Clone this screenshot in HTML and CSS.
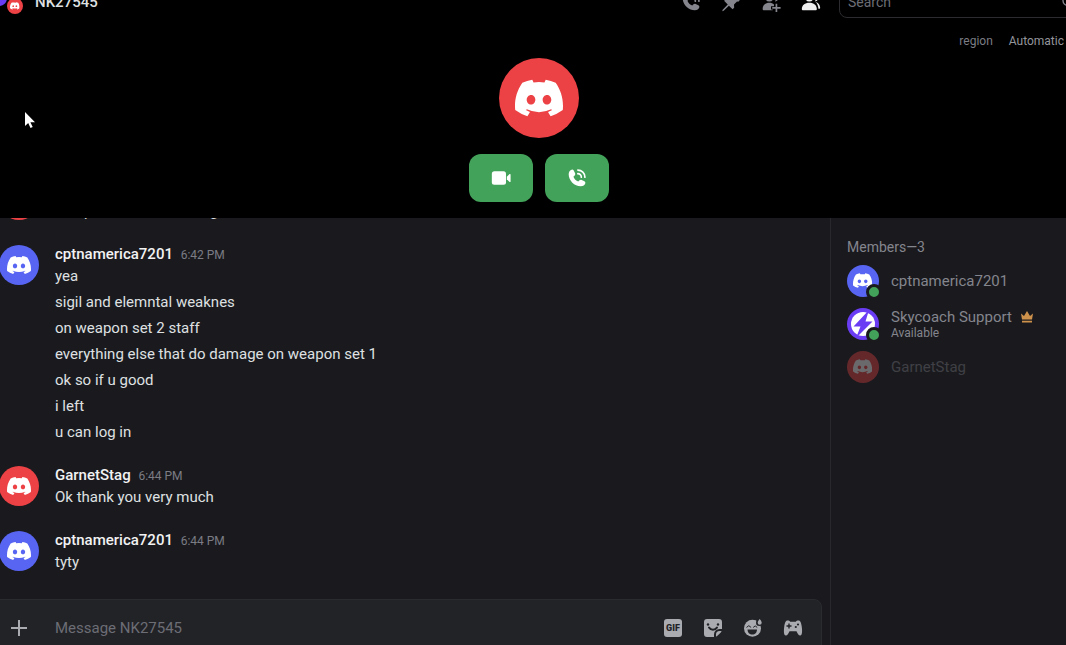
FILE: index.html
```html
<!DOCTYPE html>
<html lang="en">
<head>
    <meta charset="UTF-8">
    <meta name="viewport" content="width=device-width, initial-scale=1.0">
    <title>NK27545</title>
    <link rel="stylesheet" href="styles.css">
</head>
<body>

    <!-- shared logo -->
    <svg class="defs" width="0" height="0" aria-hidden="true">
        <symbol id="logo" viewBox="0 0 127.14 96.36">
            <path d="M107.7,8.07A105.15,105.15,0,0,0,81.47,0a72.06,72.06,0,0,0-3.36,6.83A97.68,97.68,0,0,0,49,6.83,72.37,72.37,0,0,0,45.64,0,105.89,105.89,0,0,0,19.39,8.09C2.79,32.65-1.71,56.6.54,80.21h0A105.73,105.73,0,0,0,32.71,96.36,77.7,77.7,0,0,0,39.6,85.25a68.42,68.42,0,0,1-10.85-5.18c.91-.66,1.8-1.34,2.66-2a75.57,75.57,0,0,0,64.32,0c.87.71,1.76,1.39,2.66,2a68.68,68.68,0,0,1-10.87,5.19,77,77,0,0,0,6.89,11.1A105.25,105.25,0,0,0,126.6,80.22h0C129.24,52.84,122.09,29.11,107.7,8.07ZM42.45,65.69C36.18,65.69,31,60,31,53s5-12.74,11.43-12.74S54,46,53.89,53,48.84,65.69,42.45,65.69Zm42.24,0C78.41,65.69,73.25,60,73.25,53s5-12.74,11.44-12.74S96.23,46,96.12,53,91.08,65.69,84.69,65.69Z"/>
        </symbol>
        <symbol id="call" viewBox="0 0 24 24">
            <path d="M2 7.500C2 4.600 3.600 2.600 5.600 2c1-.3 2 .2 2.500 1.100l1.600 3.300c.4.900.2 1.900-.5 2.600L7.700 10.500c.9 2.600 3.200 4.900 5.800 5.800l1.500-1.500c.7-.7 1.700-.9 2.600-.5l3.300 1.600c.9.500 1.400 1.500 1.100 2.500-.6 2-2.600 3.600-5.500 3.600C9 22 2 15 2 7.500Z"/>
            <path class="wave" d="M13 2.500a8.500 8.500 0 0 1 8.500 8.500M13 6.800a4.200 4.200 0 0 1 4.200 4.200"/>
        </symbol>
    </svg>

    <div class="app">

        <section class="call">
            <header class="toolbar">
                <span class="group-avatar">
                    <span class="avatar tiny purple"></span>
                    <span class="avatar tiny red front"><svg><use href="#logo"/></svg></span>
                </span>
                <h1>NK27545</h1>
                <nav class="tools">
                    <button type="button" aria-label="Start call"><svg viewBox="0 0 24 24"><use href="#call"/></svg></button>
                    <button type="button" aria-label="Pinned messages"><svg viewBox="0 0 24 24"><path d="M14 1.500 22.500 10l-1.800 1.800-1.500-.4-3.600 3.600.2 3.900-1.900 1.900-4.400-4.400-6.300 6.100-1.700.5.5-1.700 6.100-6.300L3.700 10.600l1.900-1.900 3.900.2 3.600-3.600-.4-1.500Z"/></svg></button>
                    <button type="button" aria-label="Add friends"><svg viewBox="0 0 24 24"><circle cx="10" cy="7" r="4.500"/><path d="M16 2.500a4.500 4.500 0 0 1 .5 9 7 7 0 0 0-.5-9ZM2 20.500C2 16 5.300 13 10 13c2.300 0 4.200.7 5.600 2v2H12v4h2v1H3.500c-.9 0-1.500-.6-1.500-1.500Z"/><path d="M17.500 14h2v4h4v2h-4v4h-2v-4h-4v-2h4Z"/></svg></button>
                    <button type="button" class="active" aria-label="Hide member list"><svg viewBox="0 0 24 24"><circle cx="10" cy="7" r="4.500"/><path d="M15.500 2.500a4.500 4.500 0 0 1 1 9 7 7 0 0 0-1-9ZM1 20.500C1 16 4.700 13 10 13s9 3 9 7.500c0 .9-.6 1.500-1.500 1.500h-15C1.600 22 1 21.400 1 20.500ZM17.500 12c3.300.9 5.300 3.300 5.500 6.800 0 .7-.5 1.200-1.200 1.200h-.9c-.2-3.300-1.300-6-3.400-8Z"/></svg></button>
                </nav>
                <label class="search">
                    <input type="text" placeholder="Search" aria-label="Search">
                    <svg viewBox="0 0 24 24"><circle cx="10" cy="10" r="7"/><path d="m15 15 7 7"/></svg>
                </label>
            </header>

            <div class="region">
                <span>region</span>
                <button type="button">Automatic</button>
            </div>

            <div class="ring">
                <span class="avatar big red"><svg><use href="#logo"/></svg></span>
                <div class="answer">
                    <button type="button" aria-label="Join video call"><svg viewBox="0 0 24 24"><rect x="1" y="4" width="17" height="16" rx="3"/><path d="M19 10.500 22.300 7.300c.6-.5 1.200-.2 1.200.5v8.400c0 .7-.6 1-1.200.5L19 13.500Z"/></svg></button>
                    <button type="button" aria-label="Join voice call"><svg viewBox="0 0 24 24"><use href="#call"/></svg></button>
                </div>
            </div>
        </section>

        <div class="content">
            <main class="chat">
                <div class="messages">
                    <article class="message">
                        <span class="avatar medium red"><svg><use href="#logo"/></svg></span>
                        <div class="text">
                            <p>Ok i put the mark first again</p>
                        </div>
                    </article>

                    <article class="message">
                        <span class="avatar medium blue"><svg><use href="#logo"/></svg></span>
                        <div class="text">
                            <h2>cptnamerica7201 <time>6:42 PM</time></h2>
                            <p>yea</p>
                            <p>sigil and elemntal weaknes</p>
                            <p>on weapon set 2 staff</p>
                            <p>everything else that do damage on weapon set 1</p>
                            <p>ok so if u good</p>
                            <p>i left</p>
                            <p>u can log in</p>
                        </div>
                    </article>

                    <article class="message">
                        <span class="avatar medium red"><svg><use href="#logo"/></svg></span>
                        <div class="text">
                            <h2>GarnetStag <time>6:44 PM</time></h2>
                            <p>Ok thank you very much</p>
                        </div>
                    </article>

                    <article class="message">
                        <span class="avatar medium blue"><svg><use href="#logo"/></svg></span>
                        <div class="text">
                            <h2>cptnamerica7201 <time>6:44 PM</time></h2>
                            <p>tyty</p>
                        </div>
                    </article>
                </div>

                <form class="composer">
                    <button type="button" class="plus" aria-label="Add attachment"><svg viewBox="0 0 20 20"><path d="M10 2v16M2 10h16"/></svg></button>
                    <input type="text" placeholder="Message NK27545" aria-label="Message NK27545">
                    <button type="button" class="gif" aria-label="Open GIF picker"><span>GIF</span></button>
                    <button type="button" aria-label="Open sticker picker"><svg viewBox="0 0 20 20"><path d="M4 1h12a3 3 0 0 1 3 3v7h-2.500a5.500 5.500 0 0 0-5.500 5.500V19H4a3 3 0 0 1-3-3V4a3 3 0 0 1 3-3Z"/><path d="M18.500 13c0 .5-.3 1-.7 1.400l-3.400 3.400c-.4.400-.9.700-1.400.7v-2a3.500 3.500 0 0 1 3.500-3.500Z"/><g class="cut"><circle cx="5" cy="6.500" r="1.200"/><circle cx="15" cy="6.500" r="1.200"/><path class="line" d="M6 9.500c1.800 3 6.200 3 8 0"/></g></svg></button>
                    <button type="button" aria-label="Open emoji picker"><svg viewBox="0 0 20 20"><circle cx="9.500" cy="10.300" r="8.500"/><g class="cut"><path d="M4.500 11.500h9.500c0 3-2 5-4.700 5s-4.800-2-4.800-5Z"/><path class="line thin" d="m3.800 9.200 2-1.500 2 1.500M10.500 9.200l1.700-1.300 1.700 1.300"/><circle cx="16.300" cy="4.800" r="3.300"/></g><path d="M16.700 1c1.200 1.600 2 2.600 2 3.700a2 2 0 0 1-4 0c0-1.100.8-2.100 2-3.700Z"/></svg></button>
                    <button type="button" aria-label="Apps"><svg viewBox="0 0 20 20"><path d="M4.500 2.500c1.500 0 2.200.4 2.700 1.300h5.600c.5-.9 1.200-1.300 2.700-1.300 2 0 2.700 2.500 3.300 6.500.5 3.800.6 8.500-1.600 8.500-1.800 0-2.400-2-3.700-4.300h-7C5.200 15.500 4.600 17.500 2.800 17.500.6 17.500.7 12.800 1.200 9 1.800 5 2.500 2.500 4.500 2.500Z"/><g class="cut"><path d="M5.300 5.500h1.400v1.800h1.800v1.400H6.700v1.800H5.300V8.700H3.500V7.300h1.800Z"/><circle cx="15" cy="6.500" r="1.100"/><circle cx="12.800" cy="9" r="1.100"/></g></svg></button>
                </form>
            </main>

            <aside class="members">
                <h2>Members—3</h2>
                <ul>
                    <li>
                        <span class="avatar small blue"><svg><use href="#logo"/></svg><i class="online"></i></span>
                        <div class="name">cptnamerica7201</div>
                    </li>
                    <li>
                        <span class="avatar small purple"><svg class="bolt" viewBox="0 0 32 32"><circle cx="16" cy="16" r="12"/><path d="M22 2 6.500 18.500h7L9 30l16.500-16.500h-7Z"/></svg><i class="online"></i></span>
                        <div class="name">
                            <div class="owner">Skycoach Support
                                <svg viewBox="0 0 14 14"><path d="M1 3.500 4 6l3-5 3 5 3-2.500L12 9.500H2ZM2 10.700h10v1.800H2Z"/></svg>
                            </div>
                            <small>Available</small>
                        </div>
                    </li>
                    <li class="offline">
                        <span class="avatar small red"><svg><use href="#logo"/></svg></span>
                        <div class="name">GarnetStag</div>
                    </li>
                </ul>
            </aside>
        </div>

        <svg class="cursor" viewBox="0 0 12 18"><path d="M1 1v14l3.200-3 2.300 5 2.200-1-2.300-4.800H11Z"/></svg>
    </div>

</body>
</html>
```

FILE: styles.css
```css
*{
    box-sizing:border-box;
}

body{
    margin:0;
    background-color:#1a1a1e;
    color:#dfe0e2;
    font-family:Roboto, "Noto Sans", sans-serif;
    font-size:15px;
    line-height:22px;
    overflow:hidden;
}

h1, h2, p, ul{
    margin:0;
    padding:0;
    font-size:15px;
}

ul{
    list-style:none;
}

button{
    display:flex;
    align-items:center;
    justify-content:center;
    padding:0;
    border:none;
    background:none;
    color:inherit;
    font:inherit;
}

input{
    min-width:0;
    padding:0;
    border:none;
    outline:none;
    background:none;
    color:inherit;
    font:inherit;
}

svg{
    display:block;
    fill:currentColor;
}

.defs{
    position:absolute;
}

.wave{
    fill:none;
    stroke:currentColor;
    stroke-width:2;
    stroke-linecap:round;
}

.app{
    position:relative;
    display:flex;
    flex-direction:column;
    height:100vh;
    overflow:hidden;
}

/* avatars */
.avatar{
    position:relative;
    display:flex;
    align-items:center;
    justify-content:center;
    flex:none;
    border-radius:50%;
    color:white;
}

.avatar svg{
    width:60%;
    height:60%;
}

.avatar .bolt{
    width:100%;
    height:100%;
}

.bolt path{
    fill:#6a3df5;
}

.tiny{
    width:16px;
    height:16px;
}

.small{
    width:32px;
    height:32px;
}

.medium{
    width:40px;
    height:40px;
}

.big{
    width:80px;
    height:80px;
}

.red{
    background-color:#ed4245;
}

.blue{
    background-color:#5865f2;
}

.purple{
    background-color:#6a3df5;
}

.online{
    position:absolute;
    right:-3px;
    bottom:-3px;
    width:16px;
    height:16px;
    border:3px solid #1a1a1e;
    border-radius:50%;
    background-color:#43a25a;
}

/* call area */
.call{
    flex:none;
    height:218px;
    background-color:black;
}

.toolbar{
    display:flex;
    align-items:center;
    height:32px;
    margin-top:-14px;
    color:#84858d;
}

.group-avatar{
    position:relative;
    width:35px;
    height:24px;
}

.group-avatar .purple{
    margin-left:-9px;
}

.group-avatar .front{
    position:absolute;
    left:7px;
    bottom:0;
}

.toolbar h1{
    flex:1;
    color:#dfe0e2;
    font-weight:500;
}

.tools{
    display:flex;
    gap:20px;
    margin-right:18px;
}

.tools svg{
    width:20px;
    height:20px;
}

.tools .active{
    color:#efeff0;
}

.search{
    display:flex;
    align-items:center;
    width:244px;
    height:32px;
    margin-right:-17px;
    padding:0 5px 0 8px;
    border:1px solid #2c2c30;
    border-radius:8px;
    font-size:14px;
}

.search input{
    flex:1;
}

.search svg{
    width:16px;
    height:16px;
    fill:none;
    stroke:currentColor;
    stroke-width:2;
}

input::placeholder{
    color:#6c6d75;
    opacity:1;
}

.region{
    display:flex;
    justify-content:flex-end;
    gap:16px;
    height:40px;
    padding:12px 2px 0 0;
    color:#7b7c84;
    font-size:12px;
}

.region button{
    height:22px;
    color:#94959c;
}

.ring{
    display:flex;
    flex-direction:column;
    align-items:center;
    gap:16px;
    margin-right:-12px;
}

.answer{
    display:flex;
    gap:12px;
}

.answer button{
    width:64px;
    height:48px;
    border-radius:12px;
    background-color:#43a25a;
    color:white;
}

.answer svg{
    width:20px;
    height:20px;
}

/* chat */
.content{
    display:flex;
    flex:1;
    min-height:0;
}

.chat{
    display:flex;
    flex-direction:column;
    flex:1;
    min-width:0;
}

.messages{
    display:flex;
    flex-direction:column;
    justify-content:flex-end;
    gap:19px;
    flex:1;
    min-height:0;
    padding-bottom:26px;
    overflow:hidden;
}

.message{
    display:flex;
    gap:16px;
    margin-left:-1px;
    padding:2px 0;
}

.message .avatar{
    margin-top:2px;
}

.text{
    display:flex;
    flex-direction:column;
    justify-content:flex-end;
    margin-bottom:-2px;
}

.text h2{
    color:#f2f2f3;
    font-weight:500;
}

.text time{
    margin-left:4px;
    color:#7b7c84;
    font-size:12px;
    font-weight:400;
    line-height:12px;
}

.text p + p{
    margin-top:4px;
}

.composer{
    display:flex;
    align-items:center;
    gap:20px;
    height:58px;
    margin:0 8px -12px -8px;
    padding:0 18px 0 16px;
    border:1px solid #2a2b2f;
    border-radius:8px;
    background-color:#222327;
    color:#aaabb1;
}

.composer input{
    flex:1;
    margin-left:6px;
}

.composer button{
    width:20px;
    height:20px;
}

.composer svg{
    width:20px;
    height:20px;
}

.plus path{
    fill:none;
    stroke:currentColor;
    stroke-width:2;
}

.gif span{
    flex:none;
    width:18px;
    height:18px;
    border-radius:3px;
    background-color:#aaabb1;
    color:#222327;
    font-size:9px;
    font-weight:900;
    line-height:18px;
}

.cut{
    fill:#222327;
}

.cut .line{
    fill:none;
    stroke:#222327;
    stroke-width:2;
    stroke-linecap:round;
}

.cut .thin{
    stroke-width:1;
}

/* member list */
.members{
    width:236px;
    padding:18px 16px;
    border-left:1px solid #29292d;
    color:#84858d;
}

.members h2{
    margin-bottom:1px;
    font-size:14px;
    font-weight:400;
}

.members li{
    display:flex;
    align-items:center;
    gap:12px;
    height:43px;
}

.name{
    line-height:18px;
}

.name small{
    display:block;
    font-size:12px;
    line-height:14px;
}

.owner{
    display:flex;
    align-items:center;
    gap:8px;
}

.owner svg{
    width:14px;
    height:14px;
    color:#cd914c;
}

.offline{
    opacity:0.35;
}

/* mouse pointer */
.cursor{
    position:absolute;
    top:111px;
    left:24px;
    width:12px;
    height:18px;
    fill:white;
}
```
